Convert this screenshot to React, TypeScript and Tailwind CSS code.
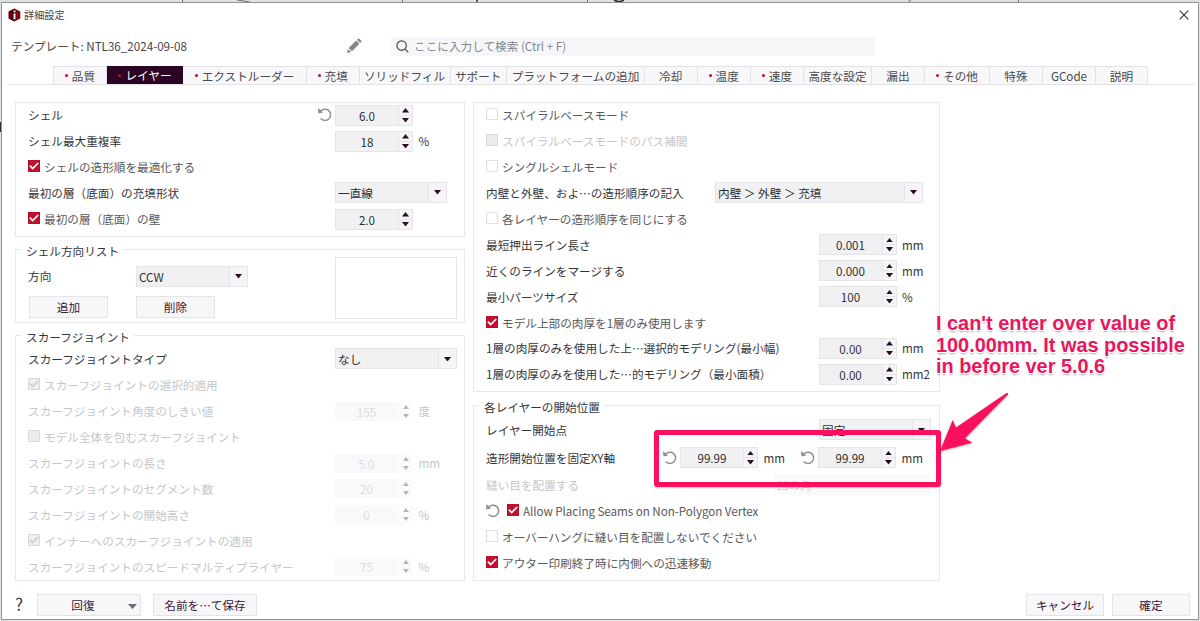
import React from "react";

type SpinProps = { value: string; disabled?: boolean };

function Reset() {
  return (
    <svg className="h-[15px] w-[15px] shrink-0" viewBox="0 0 15 15">
      <path d="M3.2 4.6 A5.7 5.7 0 1 1 3.6 11.6" fill="none" stroke="#8f8f92" strokeWidth="1.5" />
      <path d="M1 1 L1.4 6.4 L6.2 5.6 Z" fill="#8f8f92" />
    </svg>
  );
}

function Triangle({ up, className }: { up?: boolean; className: string }) {
  return (
    <svg className={className} viewBox="0 0 8 5" fill="currentColor" preserveAspectRatio="none">
      <path d={up ? "M4 0 L8 5 H0 Z" : "M4 5 L8 0 H0 Z"} />
    </svg>
  );
}

function Spin({ value, disabled }: SpinProps) {
  return (
    <div
      className={
        disabled
          ? "mt-px flex h-[19px] w-[78px] shrink-0 bg-[#f9f9fb] text-[#dcdcdf]"
          : "mt-px flex h-[21px] w-[78px] shrink-0 border border-[#e5e5e8] bg-[#f1f1f3] text-[#2e2e30]"
      }
    >
      <div className="flex flex-1 items-center justify-center">
        <span>{value}</span>
      </div>
      <div
        className={
          disabled
            ? "flex w-[15px] flex-col items-center justify-center gap-[5px] bg-[#fcfcfd] text-[#b5b5b8]"
            : "flex w-[14px] flex-col items-center justify-center gap-[2px] border-l border-[#e5e5e8] bg-[#f5f5f7] text-[#2b0a24]"
        }
      >
        <Triangle up className={disabled ? "h-[4px] w-[6px]" : "h-[4.5px] w-[7px]"} />
        {!disabled && <div className="h-px w-full bg-[#e5e5e8]" />}
        <Triangle className={disabled ? "h-[4px] w-[6px]" : "h-[4.5px] w-[7px]"} />
      </div>
    </div>
  );
}

function Combo({ value, width }: { value: string; width: string }) {
  return (
    <div className={`${width} flex h-[21px] shrink-0 border border-[#e5e5e8] bg-[#f1f1f3] text-[#2e2e30]`}>
      <div className="flex flex-1 items-center pl-[2px]">
        <span>{value}</span>
      </div>
      <div className="flex w-[18px] items-center justify-center border-l border-[#e5e5e8] bg-[#f5f5f7] text-[#2b0a24]">
        <Triangle className="h-[4.5px] w-[7px]" />
      </div>
    </div>
  );
}

type Mark = "on" | "off" | "dimOn" | "dimOff";

function Box({ mark }: { mark: Mark }) {
  const look = {
    on: "border-[#b50f2b] bg-[#bd1230] text-white",
    off: "border-[#dfdfe2] bg-white text-white",
    dimOn: "border-[#d9d9da] bg-[#efeff0] text-[#cfcfd0]",
    dimOff: "border-[#dcdcdd] bg-[#ececed] text-[#ececed]",
  }[mark];
  return (
    <div className={`${look} mr-[4px] mb-px flex h-[12px] w-[12px] shrink-0 items-center justify-center border`}>
      {(mark === "on" || mark === "dimOn") && (
        <svg className="h-[10px] w-[10px] shrink-0" viewBox="0 0 9 9" fill="none" stroke="currentColor" strokeWidth="1.5">
          <path d="M0.8 4.2 L3.3 6.8 L8.3 1.8" />
        </svg>
      )}
    </div>
  );
}

type RowProps = {
  label: string;
  mark?: Mark;
  dim?: boolean;
  reset?: boolean;
  unit?: string;
  value?: string;
  h?: string;
  tail?: string;
  children?: React.ReactNode;
};

function Row({ label, mark, dim, reset, unit, value, h = "h-[25.9px]", tail = "w-[129px]", children }: RowProps) {
  const color = dim ? "text-[#c6c6c9]" : mark ? "text-[#58585b]" : "text-[#353538]";
  return (
    <div className={`${h} ${color} flex shrink-0 items-center pl-3`}>
      {mark && <Box mark={mark} />}
      <span className="flex-1">{label}</span>
      {reset && (
        <div className="mr-[3px]">
          <Reset />
        </div>
      )}
      {(value || children) && (
        <div className={`${tail} flex shrink-0 items-center`}>
          {value && <Spin value={value} disabled={dim} />}
          {unit && <span className="ml-[5.5px]">{unit}</span>}
          {children}
        </div>
      )}
    </div>
  );
}

function Legend({ text }: { text: string }) {
  return (
    <div className="flex h-px items-center pl-[5px]">
      <span className="-mt-px bg-white pr-1 pl-[5px] text-[#353538]">{text}</span>
    </div>
  );
}

function Button({ text, className }: { text: string; className: string }) {
  return (
    <button className={`${className} flex h-[22px] shrink-0 items-center justify-center border border-[#e4e4e8] bg-[#f7f7fa] pb-px text-[#3c1434]`}>
      {text}
    </button>
  );
}

const tabs: { t: string; w: string; dot?: boolean; active?: boolean }[] = [
  { t: "品質", w: "w-[54px]", dot: true },
  { t: "レイヤー", w: "w-[76px]", dot: true, active: true },
  { t: "エクストルーダー", w: "w-[124px]", dot: true },
  { t: "充填", w: "w-[52.5px]", dot: true },
  { t: "ソリッドフィル", w: "w-[91px]" },
  { t: "サポート", w: "w-[56.5px]" },
  { t: "プラットフォームの追加", w: "w-[138px]" },
  { t: "冷却", w: "w-[52.5px]" },
  { t: "温度", w: "w-[53.5px]", dot: true },
  { t: "速度", w: "w-[53px]", dot: true },
  { t: "高度な設定", w: "w-[68px]" },
  { t: "漏出", w: "w-[53px]" },
  { t: "その他", w: "w-[65px]", dot: true },
  { t: "特殊", w: "w-[53px]" },
  { t: "GCode", w: "w-[53px]" },
  { t: "説明", w: "w-[52px]" },
];

const group = "border border-[#e9e9eb]";

export default function App() {
  return (
    <div className="relative h-[621px] w-[1200px] overflow-hidden bg-[#dfe1e3] pt-[2px] pl-px font-['Noto_Sans_CJK_JP','Noto_Sans',sans-serif] text-[11.64px] leading-[17px] whitespace-nowrap">
      <svg className="absolute top-0 left-0 h-[621px] w-[1200px]" viewBox="0 0 1200 621" fill="none" stroke="#6d6f72">
        <path d="M182.5 0 V2 M402.5 0 V2 M587.5 0 V2 M1018.5 0 V2 M237 0 L250 2 M908 2 L911 0" strokeWidth="1" />
        <path d="M477 0 V2 M614 0 Q619 3 624 0 M0.5 122 V132" stroke="#2f3033" strokeWidth="1.5" />
      </svg>
      <div className="relative flex h-[618px] w-[1198px] flex-col border border-[#929497] bg-white">
        <div className="flex h-[24px] items-center pr-[9px] pl-[6px]">
          <svg className="h-[14px] w-[13px]" viewBox="0 0 13 14">
            <path d="M6.5 0.5 L12.3 3.6 V10.4 L6.5 13.5 L0.7 10.4 V3.6 Z" fill="#7a0712" />
            <path d="M6.5 0.5 L0.7 3.6 V10.4 L6.5 13.5 Z" fill="#56030b" />
            <path d="M6.5 2.6 V4.2 M6.5 5.4 V11.2" stroke="#fff" strokeWidth="1.8" />
          </svg>
          <span className="ml-[3px] flex-1 pb-px text-[10.2px] text-[#454547]">詳細設定</span>
          <svg className="h-[10px] w-[10px]" viewBox="0 0 10 10" stroke="#2f2f31" strokeWidth="1.1">
            <path d="M0.7 0.7 L9.3 9.3 M9.3 0.7 L0.7 9.3" />
          </svg>
        </div>

        <div className="flex h-[39px] items-center pl-[9px] text-[#454547]">
          <span className="w-[335px] pb-[2px]">テンプレート: NTL36_2024-09-08</span>
          <svg className="mb-px h-[16px] w-[16px]" viewBox="0 0 16 16" fill="#858587">
            <path d="M1 15 L1.9 10.9 L5.1 14.1 Z M2.7 10.1 L10.2 2.6 L13.4 5.8 L5.9 13.3 Z M11 1.8 L12.1 0.8 Q12.8 0.3 13.5 0.9 L15.1 2.5 Q15.7 3.2 15.2 3.9 L14.2 5 Z" />
          </svg>
          <div className="mb-px ml-[29px] flex h-[19px] w-[484px] items-center bg-[#f7f7fa] pl-[5px] text-[#85858a]">
            <svg className="h-[13px] w-[13px]" viewBox="0 0 13 13" fill="none" stroke="#4a4a4d" strokeWidth="1.2">
              <circle cx="5.6" cy="5.6" r="4.7" />
              <path d="M9 9 L12.3 12.3" />
            </svg>
            <span className="ml-[5px] pb-px">ここに入力して検索 (Ctrl + F)</span>
          </div>
        </div>

        <div className="mr-[3px] ml-[5px] flex h-[19px] border-b border-[#e3e3e6] pl-[46px]">
          {tabs.map((tab, i) => (
            <div
              key={tab.t}
              className={`${tab.w} ${
                tab.active ? "bg-[#2c0524] text-white" : "border-t border-r border-[#e3e3e6] bg-[#f8f8fa] text-[#4a4a4d]"
              } ${i === 0 ? "border-l" : ""} flex shrink-0 items-center justify-center`}
            >
              {tab.dot && <span className="mr-[4px] h-[3px] w-[3px] rounded-full bg-[#c00d2c]" />}
              <span className="pb-px">{tab.t}</span>
            </div>
          ))}
        </div>

        <div className="flex h-[497px] items-start gap-[8px] pt-[17px] pl-[13px]">
          <div className="flex w-[450px] flex-col">
            <div className={`${group} flex h-[135px] flex-col`}>
              <div className="-mt-px flex flex-col">
                <Row label="シェル" value="6.0" reset />
                <Row label="シェル最大重複率" value="18" unit="%" />
                <Row label="シェルの造形順を最適化する" mark="on" />
                <Row label="最初の層（底面）の充填形状">
                  <Combo value="一直線" width="w-[112px]" />
                </Row>
                <Row label="最初の層（底面）の壁" mark="on" value="2.0" />
              </div>
            </div>

            <div className={`${group} mt-[12px] flex h-[74px] flex-col`}>
              <Legend text="シェル方向リスト" />
              <div className="mt-[6px] flex pl-3">
                <div className="flex w-[307px] flex-col gap-[9px] pt-[9px]">
                  <div className="flex items-center">
                    <span className="w-[108px] pb-[2px] text-[#353538]">方向</span>
                    <Combo value="CCW" width="w-[112px]" />
                  </div>
                  <div className="flex gap-[28px] pl-px">
                    <Button text="追加" className="w-[79px]" />
                    <Button text="削除" className="w-[79px]" />
                  </div>
                </div>
                <div className="h-[62px] w-[122px] border border-[#e6e6e8]" />
              </div>
            </div>

            <div className={`${group} mt-[12px] flex h-[246px] flex-col`}>
              <Legend text="スカーフジョイント" />
              <div className="flex flex-col pt-[9px]">
                <Row label="スカーフジョイントタイプ">
                  <Combo value="なし" width="w-[122px]" />
                </Row>
                <Row label="スカーフジョイントの選択的適用" mark="dimOn" dim />
                <Row label="スカーフジョイント角度のしきい値" value="155" unit="度" dim />
                <Row label="モデル全体を包むスカーフジョイント" mark="dimOff" dim />
                <Row label="スカーフジョイントの長さ" value="5.0" unit="mm" dim />
                <Row label="スカーフジョイントのセグメント数" value="20" dim />
                <Row label="スカーフジョイントの開始高さ" value="0" unit="%" dim />
                <Row label="インナーへのスカーフジョイントの適用" mark="dimOn" dim />
                <Row label="スカーフジョイントのスピードマルティプライヤー" value="75" unit="%" dim />
              </div>
            </div>
          </div>

          <div className="flex w-[467px] flex-col">
            <div className={`${group} flex h-[290px] flex-col`}>
              <div className="-mt-px flex flex-col">
                <Row label="スパイラルベースモード" mark="off" />
                <Row label="スパイラルベースモードのパス補間" mark="dimOff" dim />
                <Row label="シングルシェルモード" mark="off" />
                <Row label="内壁と外壁、およ…の造形順序の記入" tail="w-[224px]">
                  <Combo value="内壁 ＞ 外壁 ＞ 充填" width="w-[208px]" />
                </Row>
                <Row label="各レイヤーの造形順序を同じにする" mark="off" />
                <Row label="最短押出ライン長さ" value="0.001" unit="mm" tail="w-[120.5px]" />
                <Row label="近くのラインをマージする" value="0.000" unit="mm" tail="w-[120.5px]" />
                <Row label="最小パーツサイズ" value="100" unit="%" tail="w-[120.5px]" />
                <Row label="モデル上部の肉厚を1層のみ使用します" mark="on" />
                <Row label="1層の肉厚のみを使用した上…選択的モデリング(最小幅)" value="0.00" unit="mm" tail="w-[120.5px]" />
                <Row label="1層の肉厚のみを使用した…的モデリング（最小面積）" value="0.00" unit="mm2" tail="w-[120.5px]" />
              </div>
            </div>

            <div className={`${group} mt-[13px] flex h-[176px] flex-col`}>
              <Legend text="各レイヤーの開始位置" />
              <div className="flex flex-col pt-[10px]">
                <Row label="レイヤー開始点" tail="w-[120px]">
                  <Combo value="固定" width="w-[112px]" />
                </Row>
                <Row label="造形開始位置を固定XY軸" h="h-[29px]" reset value="99.99" unit="mm" tail="w-[259px]">
                  <div className="ml-[15px] mr-[3px]">
                    <Reset />
                  </div>
                  <Spin value="99.99" />
                  <span className="ml-[5.5px]">mm</span>
                </Row>
                <Row label="縫い目を配置する" dim tail="w-[165px]">
                  <div className="flex h-[21px] w-[156px] items-center bg-[#fafafb] pl-[3px] text-[#d4d4d7]">凹の角</div>
                </Row>
                <div className="flex h-[25.9px] items-center pl-[11px] text-[#58585b]">
                  <Reset />
                  <div className="ml-[7px]">
                    <Box mark="on" />
                  </div>
                  <span className="tracking-[-0.05px]">Allow Placing Seams on Non-Polygon Vertex</span>
                </div>
                <Row label="オーバーハングに縫い目を配置しないでください" mark="off" />
                <Row label="アウター印刷終了時に内側への迅速移動" mark="on" />
              </div>
            </div>
          </div>
        </div>

        <div className="mt-[12px] flex items-center pr-[8px] pl-[13px]">
          <span className="w-[22px] pb-[3px] text-[17px] text-[#3c3c3e]">?</span>
          <button className="flex h-[22px] w-[104px] items-center border border-[#e4e4e8] bg-[#f7f7fa] text-[#3c1434]">
            <span className="flex-1 pb-px text-center">回復</span>
            <Triangle className="mt-[2px] mr-[3px] h-[5px] w-[9px] text-[#6f6a78]" />
          </button>
          <Button text="名前を…て保存" className="ml-[12px] w-[104px]" />
          <div className="flex-1" />
          <Button text="キャンセル" className="mr-[8px] w-[78px]" />
          <Button text="確定" className="w-[78px]" />
        </div>
      </div>

      <div className="absolute top-[430px] left-[654px] h-[57px] w-[287px] rounded-[3px] border-[5px] border-[#fb1060] shadow-[0_1px_2px_rgba(0,0,0,0.2)]" />
      <svg className="absolute top-[385px] left-[935px] h-[72px] w-[80px] drop-shadow-[0_1px_1px_rgba(0,0,0,0.3)]" viewBox="935 385 80 72" fill="#fb1060">
        <path d="M940 451 L952.7 420 L956 427.5 L1006.5 393 Q1008.5 392.5 1008 394.5 L965 438.3 L972.3 442.7 Z" />
      </svg>
      <div className="absolute top-[313px] left-[936px] font-['Liberation_Sans',sans-serif] text-[19.9px] leading-[21.7px] font-bold text-[#e6175f] [text-shadow:1px_0_0_#fff,-1px_0_0_#fff,0_1px_0_#fff,0_-1px_0_#fff,1px_1px_0_#fff,-1px_1px_0_#fff,0_2px_2px_rgba(0,0,0,0.35)]">
        <div>I can't enter over value of</div>
        <div>100.00mm. It was possible</div>
        <div>in before ver 5.0.6</div>
      </div>
    </div>
  );
}
